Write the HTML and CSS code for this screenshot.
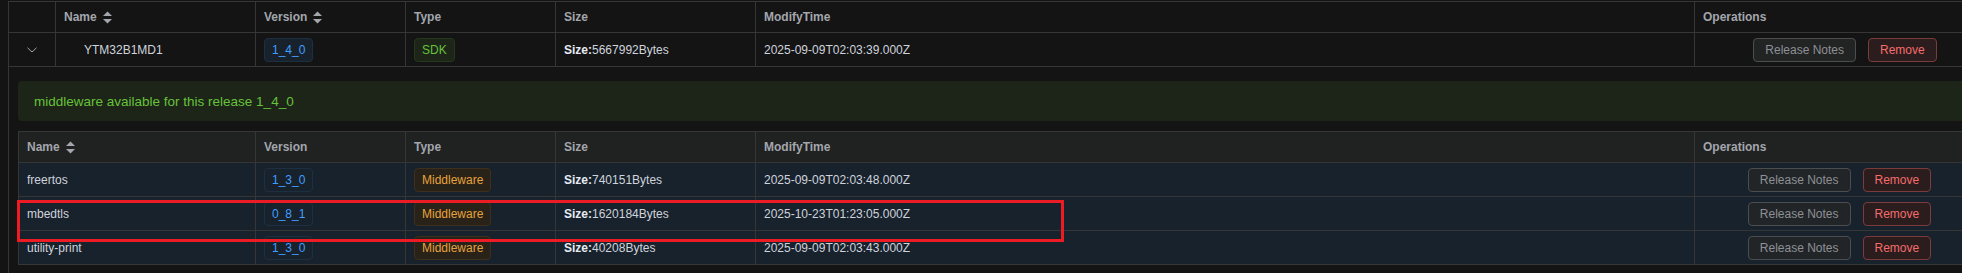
FILE: index.html
```html
<!DOCTYPE html>
<html>
<head>
<meta charset="utf-8">
<link rel="stylesheet" href="styles.css">
</head>
<body>
<div class="page">
  <table class="grid outer">
    <colgroup>
      <col class="c-exp"><col class="c-name"><col class="c-ver"><col class="c-type"><col class="c-size"><col class="c-time"><col class="c-ops">
    </colgroup>
    <thead>
      <tr>
        <th></th>
        <th>Name<svg class="sort" viewBox="0 0 9 13"><polygon points="0,5 4.5,0.5 9,5"/><polygon points="0,8 4.5,12.5 9,8"/></svg></th>
        <th>Version<svg class="sort" viewBox="0 0 9 13"><polygon points="0,5 4.5,0.5 9,5"/><polygon points="0,8 4.5,12.5 9,8"/></svg></th>
        <th>Type</th>
        <th>Size</th>
        <th>ModifyTime</th>
        <th>Operations</th>
      </tr>
    </thead>
    <tbody>
      <tr>
        <td class="exp"><svg class="chev" viewBox="0 0 10 6"><polyline points="0.5,0.8 5,5 9.5,0.8"/></svg></td>
        <td class="indent">YTM32B1MD1</td>
        <td><span class="tag tag-ver">1_4_0</span></td>
        <td><span class="tag tag-sdk">SDK</span></td>
        <td><b class="lbl">Size:</b>5667992Bytes</td>
        <td>2025-09-09T02:03:39.000Z</td>
        <td class="ops"><button class="btn btn-plain">Release Notes</button><button class="btn btn-danger">Remove</button></td>
      </tr>
      <tr>
        <td colspan="7" class="exp-cell">
          <div class="alert">middleware available for this release 1_4_0</div>
          <table class="grid inner">
            <colgroup>
              <col class="i-name"><col class="c-ver"><col class="c-type"><col class="c-size"><col class="c-time"><col class="i-ops">
            </colgroup>
            <thead>
              <tr>
                <th>Name<svg class="sort" viewBox="0 0 9 13"><polygon points="0,5 4.5,0.5 9,5"/><polygon points="0,8 4.5,12.5 9,8"/></svg></th>
                <th>Version</th>
                <th>Type</th>
                <th>Size</th>
                <th>ModifyTime</th>
                <th>Operations</th>
              </tr>
            </thead>
            <tbody>
              <tr>
                <td>freertos</td>
                <td><span class="tag tag-ver">1_3_0</span></td>
                <td><span class="tag tag-mw">Middleware</span></td>
                <td><b class="lbl">Size:</b>740151Bytes</td>
                <td>2025-09-09T02:03:48.000Z</td>
                <td class="ops"><button class="btn btn-plain">Release Notes</button><button class="btn btn-danger">Remove</button></td>
              </tr>
              <tr>
                <td>mbedtls</td>
                <td><span class="tag tag-ver">0_8_1</span></td>
                <td><span class="tag tag-mw">Middleware</span></td>
                <td><b class="lbl">Size:</b>1620184Bytes</td>
                <td>2025-10-23T01:23:05.000Z</td>
                <td class="ops"><button class="btn btn-plain">Release Notes</button><button class="btn btn-danger">Remove</button></td>
              </tr>
              <tr>
                <td>utility-print</td>
                <td><span class="tag tag-ver">1_3_0</span></td>
                <td><span class="tag tag-mw">Middleware</span></td>
                <td><b class="lbl">Size:</b>40208Bytes</td>
                <td>2025-09-09T02:03:43.000Z</td>
                <td class="ops"><button class="btn btn-plain">Release Notes</button><button class="btn btn-danger">Remove</button></td>
              </tr>
            </tbody>
          </table>
        </td>
      </tr>
    </tbody>
  </table>
  <div class="annot"></div>
</div>
</body>
</html>
```

FILE: styles.css
```css
html, body {
  margin: 0;
  padding: 0;
  background: #141414;
  overflow: hidden;
}

.page {
  position: relative;
  width: 2000px;
  padding: 1px 0 0 8px;
}

.grid {
  border-collapse: separate;
  border-spacing: 0;
  table-layout: fixed;
  border-top: 1px solid #363637;
  border-left: 1px solid #363637;
  font-family: "Liberation Sans", Arial, sans-serif;
  font-size: 12px;
  color: #cfd3dc;
}

.outer {
  width: 1988px;
  background: #141414;
}

.inner {
  width: 1967px;
}

.c-exp { width: 47px; }
.c-name { width: 200px; }
.c-ver { width: 150px; }
.c-type { width: 150px; }
.c-size { width: 200px; }
.c-time { width: 939px; }
.c-ops { width: 301px; }
.i-name { width: 237px; }
.i-ops { width: 290px; }

.grid th,
.grid td {
  box-sizing: border-box;
  border-right: 1px solid #363637;
  border-bottom: 1px solid #363637;
  padding: 0 8px;
  text-align: left;
  vertical-align: middle;
  white-space: nowrap;
  overflow: hidden;
}

.grid th {
  height: 31px;
  color: #a3a6ad;
  font-weight: bold;
}

.grid td {
  height: 34px;
}

.inner th {
  background: #202121;
}

.inner td {
  background: #18222c;
}

.sort {
  width: 9px;
  height: 13px;
  margin-left: 6px;
  vertical-align: middle;
  fill: #a3a6ad;
}

.exp {
  text-align: center !important;
  padding: 0 !important;
}

.chev {
  display: block;
  margin: 0 auto;
  width: 10px;
  height: 6px;
  fill: none;
  stroke: #a3a6ad;
  stroke-width: 1;
}

.indent {
  padding-left: 28px !important;
}

.lbl {
  color: #e5eaf3;
  font-weight: bold;
}

.tag {
  display: inline-block;
  box-sizing: border-box;
  height: 24px;
  line-height: 22px;
  padding: 0 7px;
  border: 1px solid;
  border-radius: 4px;
  font-size: 12px;
  vertical-align: middle;
}

.tag-ver {
  background: #18222c;
  border-color: #1d3043;
  color: #409eff;
}

.tag-sdk {
  background: #1c2518;
  border-color: #25371c;
  color: #67c23a;
}

.tag-mw {
  background: #292218;
  border-color: #3e301c;
  color: #e6a23c;
}

.ops {
  text-align: center !important;
}

.btn {
  box-sizing: border-box;
  height: 24px;
  padding: 0 11px;
  border: 1px solid;
  border-radius: 4px;
  font-family: "Liberation Sans", Arial, sans-serif;
  font-size: 12px;
  vertical-align: middle;
  cursor: pointer;
}

.btn + .btn {
  margin-left: 12px;
}

.btn-plain {
  background: rgba(38, 39, 39, 0.8);
  border-color: #4c4d4f;
  color: #8d9095;
}

.btn-danger {
  background: #2b1d1d;
  border-color: #7a3b3b;
  color: #f56c6c;
}

.exp-cell {
  height: auto !important;
  padding: 14px 10px 10px 9px !important;
  vertical-align: top !important;
}

.alert {
  box-sizing: border-box;
  height: 40px;
  margin-bottom: 10px;
  padding: 0 16px;
  display: flex;
  align-items: center;
  background: #1c2518;
  color: #67c23a;
  border-radius: 4px;
  font-family: "Liberation Sans", Arial, sans-serif;
  font-size: 13.5px;
}

.annot {
  position: absolute;
  left: 17px;
  top: 200px;
  width: 1047px;
  height: 42px;
  box-sizing: border-box;
  border: 3px solid #ed1c24;
  pointer-events: none;
}
```
